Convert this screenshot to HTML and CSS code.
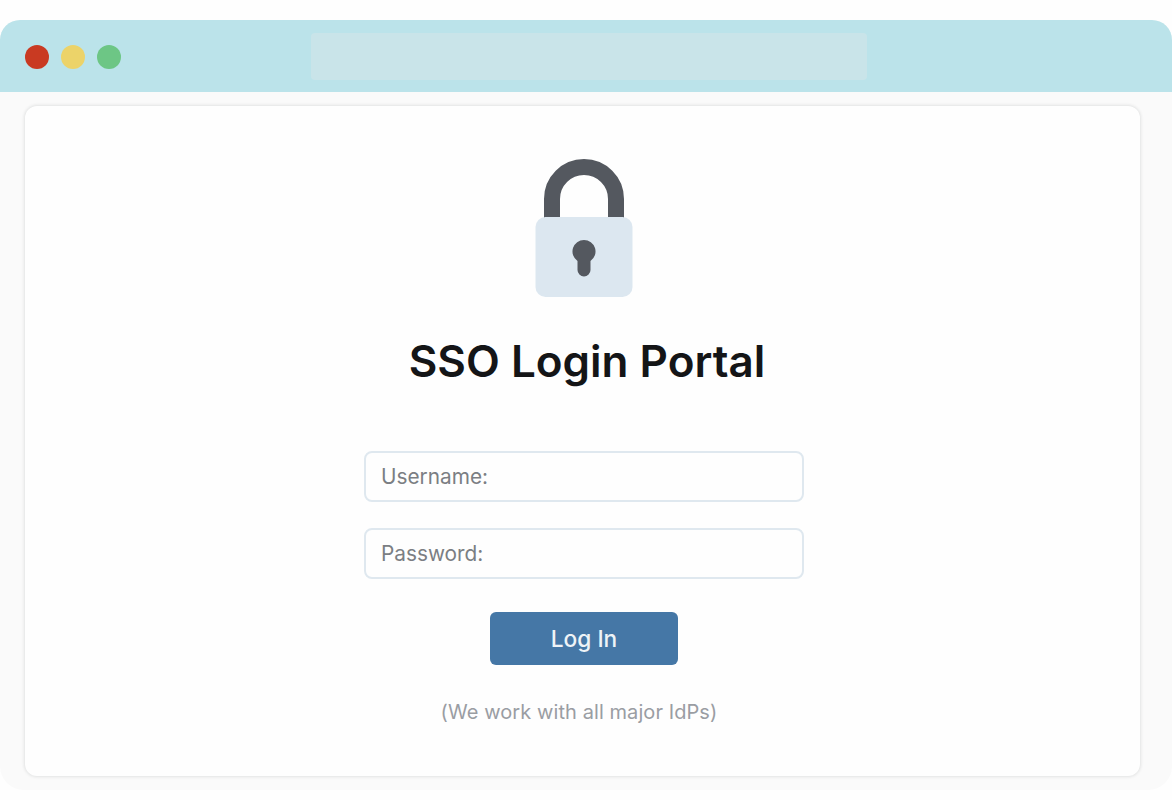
FILE: index.html
```html
<!DOCTYPE html>
<html lang="en">
<head>
  <meta charset="UTF-8" />
  <meta name="viewport" content="width=device-width, initial-scale=1.0" />
  <title>SSO Login Portal</title>
  <link rel="stylesheet" href="styles.css">
</head>
<body>
  <div class="window">
    <div class="titlebar">
      <div class="dots">
        <span class="dot red"></span>
        <span class="dot yellow"></span>
        <span class="dot green"></span>
      </div>
      <div class="addressbar"></div>
    </div>
    <div class="content">
      <main class="card">
        <svg class="lock" width="98" height="138" viewBox="0 0 98 138" aria-hidden="true">
          <path d="M17 62V40a32 32 0 0 1 64 0V62" fill="none" stroke="#54585f" stroke-width="16" />
          <rect x="0.500" y="58" width="97" height="80" rx="10" fill="#dce7f0" />
          <path d="M49 81a11.500 11.500 0 0 1 6.500 21V111a6.500 6.500 0 0 1-13 0V102A11.500 11.500 0 0 1 49 81z" fill="#54585f" />
        </svg>
        <h1>SSO Login Portal</h1>
        <form class="login">
          <div class="field">Username:</div>
          <div class="field">Password:</div>
          <button type="button">Log In</button>
        </form>
        <p class="note">(We work with all major IdPs)</p>
      </main>
    </div>
  </div>
</body>
</html>
```

FILE: styles.css
```css
body {
  margin: 0;
  font-family: Inter, 'Liberation Sans', sans-serif;
  background-color: #fefefe;
  color: #141517;
}
.window {
  margin-top: 20px;
  height: 770px;
  display: flex;
  flex-direction: column;
  background-color: #fafafa;
  border-radius: 20px 20px 24px 24px;
}
.titlebar {
  height: 71px;
  flex: none;
  display: flex;
  align-items: center;
  padding: 1px 305px 0 25px;
  background-color: #bbe3ea;
  border-radius: 20px 20px 0 0;
}
.dots {
  display: flex;
  gap: 12px;
  width: 286px;
}
.dot {
  width: 24px;
  height: 24px;
  border-radius: 50%;
}
.red {
  background-color: #c93a22;
}
.yellow {
  background-color: #ecd369;
}
.green {
  background-color: #6dc685;
}
.addressbar {
  flex: 1;
  height: 47px;
  background-color: #c9e4e9;
  border-radius: 4px;
}
.content {
  flex: 1;
  padding: 14px 32px 14px 25px;
  display: flex;
}
.card {
  flex: 1;
  display: flex;
  flex-direction: column;
  align-items: center;
  background-color: #fefefe;
  border-radius: 12px;
  box-shadow: 0 0 3px 1px #e2e3e3;
}
.lock {
  margin: 53px 0 0 3px;
}
h1 {
  margin: 36px 0 0 9px;
  font-size: 44px;
  line-height: 56px;
  font-weight: 600;
}
.login {
  margin: 62px 0 0 3px;
  display: flex;
  flex-direction: column;
  align-items: center;
}
.field {
  box-sizing: border-box;
  width: 440px;
  height: 51px;
  margin-bottom: 26px;
  padding: 0 15px;
  display: flex;
  align-items: center;
  font-size: 20.800px;
  color: #7b7e83;
  background-color: #fefefe;
  border: 2px solid #dfe8ef;
  border-radius: 8px;
}
button {
  width: 188px;
  height: 53px;
  margin-top: 7px;
  font-family: inherit;
  font-size: 22.700px;
  font-weight: 500;
  color: #eef3f7;
  background-color: #4577a6;
  border: none;
  border-radius: 6px;
}
.note {
  margin: 34px 0 0 -7px;
  font-size: 20px;
  line-height: 26px;
  letter-spacing: 0.080px;
  color: #9a9da3;
}
```
